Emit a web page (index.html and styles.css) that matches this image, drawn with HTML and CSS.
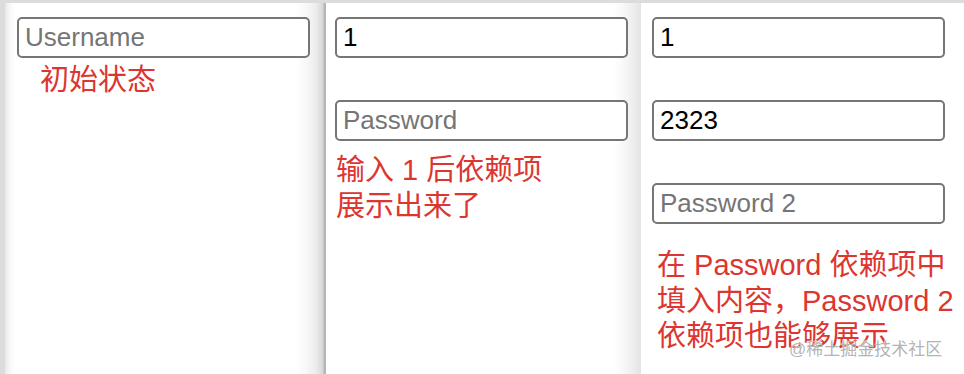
FILE: index.html
```html
<!DOCTYPE html>
<html lang="zh-CN">
<head>
<meta charset="utf-8">
<title>依赖项展示</title>
<link rel="stylesheet" href="styles.css">
</head>
<body>
<div class="stage">
  <section class="panel panel-1">
    <input class="field" type="text" placeholder="Username">
    <p class="note note-1">初始状态</p>
  </section>
  <section class="panel panel-2">
    <input class="field" type="text" value="1">
    <input class="field" type="text" placeholder="Password">
    <p class="note note-2">输入 1 后依赖项<br>展示出来了</p>
  </section>
  <section class="panel panel-3">
    <input class="field" type="text" value="1">
    <input class="field" type="text" value="2323">
    <input class="field" type="text" placeholder="Password 2">
    <p class="note note-3">在 Password 依赖项中<br>填入内容，Password 2<br>依赖项也能够展示</p>
  </section>
  <div class="watermark">@稀土掘金技术社区</div>
</div>
</body>
</html>
```
FILE: styles.css
```css
html, body {
  margin: 0;
  padding: 0;
  background: #fff;
}
.stage {
  position: relative;
  display: flex;
  width: 964px;
  height: 374px;
  padding-top: 3px;
  box-sizing: border-box;
  background: #dcdcdc;
  overflow: hidden;
  font-family: "Liberation Sans", "Noto Sans CJK SC", sans-serif;
}
.panel {
  display: flex;
  flex-direction: column;
  align-items: flex-start;
  box-sizing: border-box;
  padding-top: 14px;
  background: #fff;
}
.panel-1 {
  width: 323px;
  margin-left: 3px;
  padding-left: 14px;
  background:
    linear-gradient(to right, #d4d4d4 0, #ececec 3px, #f8f8f8 7px, rgba(255,255,255,0) 12px),
    linear-gradient(to left, #b4b4b4 0, #b8b8b8 2px, #d6d6d6 3px, #ececec 10px, #f8f8f8 20px, #fff 30px);
}
.panel-2 {
  width: 315px;
  padding-left: 9px;
  background: linear-gradient(to left, #e2e2e2 0, #e6e6e6 2px, #f0f0f0 10px, #fafafa 20px, #fff 28px);
}
.panel-3 {
  flex: 1;
  padding-left: 11px;
}
.field {
  display: block;
  width: 293px;
  height: 41px;
  margin: 0 0 42px 0;
  padding: 0 6px;
  box-sizing: border-box;
  border: 2px solid #767676;
  border-radius: 5px;
  background: #fff;
  color: #000;
  font-family: "Liberation Sans", "Noto Sans CJK SC", sans-serif;
  font-size: 26px;
  outline: none;
}
.field::placeholder {
  color: #757575;
}
.note {
  margin: 0;
  color: #dd3530;
  font-size: 29px;
  line-height: 35.5px;
  white-space: nowrap;
}
.note-1 {
  margin-top: -37px;
  margin-left: 23px;
}
.note-2 {
  margin-top: -30px;
  margin-left: 1px;
}
.note-3 {
  margin-top: -18px;
  margin-left: 5px;
}
.watermark {
  position: absolute;
  left: 789px;
  top: 340px;
  font-size: 17px;
  line-height: 20px;
  color: rgba(160, 160, 160, 0.8);
  text-shadow: 0 0 1px #fff, 0 0 1px #fff;
  white-space: nowrap;
}
```
